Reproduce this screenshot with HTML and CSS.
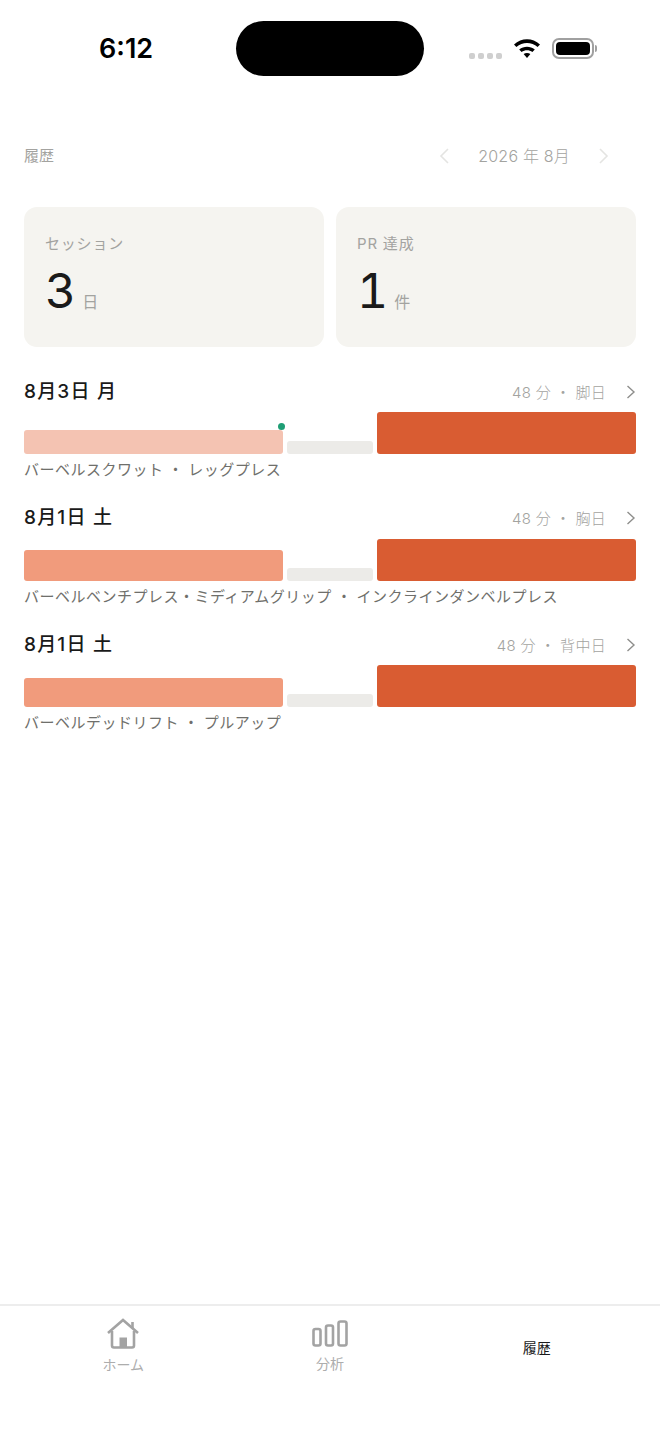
FILE: index.html
```html
<!DOCTYPE html>
<html lang="ja">
<head>
    <meta charset="UTF-8">
    <meta name="viewport" content="width=device-width, initial-scale=1.0">
    <title>履歴</title>
    <link rel="stylesheet" href="styles.css">
</head>
<body>
<div class="screen">

    <!-- Status bar -->
    <div class="status-bar">
        <div class="time">6:12</div>
        <div class="island"></div>
        <div class="status-icons">
            <div class="signal"><span></span><span></span><span></span><span></span></div>
            <svg class="wifi" width="28" height="22" viewBox="0 0 28 22">
                <path d="M1 7.5 C8.5 0.5 19.5 0.5 27 7.5 L24.6 10 C18.5 4.6 9.5 4.6 3.4 10 Z" fill="#000"/>
                <path d="M6.2 12.6 C10.8 8.8 17.2 8.8 21.8 12.6 L19.4 15.1 C16.2 12.6 11.8 12.6 8.6 15.1 Z" fill="#000"/>
                <path d="M10.6 17 C12.6 15.7 15.4 15.7 17.4 17 L14 21 Z" fill="#000"/>
            </svg>
            <div class="battery"><div class="battery-fill"></div></div>
            <div class="battery-cap"></div>
        </div>
    </div>

    <!-- Header -->
    <div class="header">
        <div class="page-title">履歴</div>
        <div class="month-nav">
            <svg class="nav-arrow" width="12" height="18" viewBox="0 0 12 18"><path d="M10 2 L3 9 L10 16" /></svg>
            <div class="month-label">2026 年 8月</div>
            <svg class="nav-arrow" width="12" height="18" viewBox="0 0 12 18"><path d="M2 2 L9 9 L2 16" /></svg>
        </div>
    </div>

    <!-- Summary cards -->
    <div class="cards">
        <div class="card">
            <div class="card-label">セッション</div>
            <div class="card-value"><span class="num">3</span><span class="unit">日</span></div>
        </div>
        <div class="card">
            <div class="card-label">PR 達成</div>
            <div class="card-value"><span class="num">1</span><span class="unit">件</span></div>
        </div>
    </div>

    <!-- Sessions -->
    <div class="sessions">
        <div class="session">
            <div class="session-head">
                <div class="session-date">8月3日 月</div>
                <div class="session-meta">48 分 ・ 脚日</div>
                <svg class="row-arrow" width="10" height="14" viewBox="0 0 10 14"><path d="M1.5 1 L8 7 L1.5 13" /></svg>
            </div>
            <div class="bars">
                <div class="bar bar-light"><span class="pr-dot"></span></div>
                <div class="bar bar-rest"></div>
                <div class="bar bar-main"></div>
            </div>
            <div class="session-names">バーベルスクワット ・ レッグプレス</div>
        </div>

        <div class="session">
            <div class="session-head">
                <div class="session-date">8月1日 土</div>
                <div class="session-meta">48 分 ・ 胸日</div>
                <svg class="row-arrow" width="10" height="14" viewBox="0 0 10 14"><path d="M1.5 1 L8 7 L1.5 13" /></svg>
            </div>
            <div class="bars">
                <div class="bar bar-mid" style="height: 31px"></div>
                <div class="bar bar-rest"></div>
                <div class="bar bar-main"></div>
            </div>
            <div class="session-names">バーベルベンチプレス・ミディアムグリップ ・ インクラインダンベルプレス</div>
        </div>

        <div class="session">
            <div class="session-head">
                <div class="session-date">8月1日 土</div>
                <div class="session-meta">48 分 ・ 背中日</div>
                <svg class="row-arrow" width="10" height="14" viewBox="0 0 10 14"><path d="M1.5 1 L8 7 L1.5 13" /></svg>
            </div>
            <div class="bars">
                <div class="bar bar-mid" style="height: 29px"></div>
                <div class="bar bar-rest"></div>
                <div class="bar bar-main"></div>
            </div>
            <div class="session-names">バーベルデッドリフト ・ プルアップ</div>
        </div>
    </div>

    <!-- Tab bar -->
    <div class="tabbar">
        <div class="tab">
            <svg width="34" height="31" viewBox="0 0 34 31">
                <path class="tab-line" d="M2 15 L17 2 L32 15" />
                <path class="tab-line" d="M26.5 4 V10" />
                <path class="tab-line" d="M6 13 V27.5 Q6 29.5 8 29.5 H26 Q28 29.5 28 27.5 V13" />
                <rect x="13.5" y="19.5" width="7.5" height="10" fill="#a3a3a3" />
            </svg>
            <div class="tab-label tab-label-home">ホーム</div>
        </div>
        <div class="tab tab-chart">
            <svg width="36" height="27" viewBox="0 0 36 27">
                <rect class="tab-line" x="1.5" y="9" width="7" height="16.5" rx="2" />
                <rect class="tab-line" x="14" y="5.5" width="7" height="20" rx="2" />
                <rect class="tab-line" x="26.5" y="1.5" width="8" height="24" rx="2" />
            </svg>
            <div class="tab-label tab-label-chart">分析</div>
        </div>
        <div class="tab tab-active">
            <div class="tab-label">履歴</div>
        </div>
    </div>

</div>
</body>
</html>
```

FILE: styles.css
```css
body {
    margin: 0;
    padding: 0;
    background-color: #fff;
    font-family: Inter, "Noto Sans CJK JP", sans-serif;
}

.screen {
    width: 660px;
    height: 1434px;
    display: flex;
    flex-direction: column;
    overflow: hidden;
}

/* Status bar */
.status-bar {
    position: relative;
    height: 76px;
    flex-shrink: 0;
}

.time {
    position: absolute;
    left: 99px;
    top: 33px;
    font-size: 27px;
    line-height: 32px;
    font-weight: 600;
    color: #000;
}

.island {
    position: absolute;
    left: 236px;
    top: 21px;
    width: 188px;
    height: 55px;
    border-radius: 28px;
    background-color: #000;
}

.status-icons {
    position: absolute;
    left: 469px;
    top: 38px;
    display: flex;
    align-items: center;
}

.signal {
    display: flex;
    gap: 3px;
    margin-top: 14px;
    margin-right: 11px;
}

.signal span {
    width: 6px;
    height: 6px;
    border-radius: 2px;
    background-color: #cfcfcf;
}

.wifi {
    margin-right: 11px;
    margin-top: -2px;
}

.battery {
    width: 42px;
    height: 21px;
    box-sizing: border-box;
    border: 2px solid #a0a0a0;
    border-radius: 7px;
    padding: 2px;
}

.battery-fill {
    height: 100%;
    border-radius: 4px;
    background-color: #000;
}

.battery-cap {
    width: 2px;
    height: 7px;
    margin-left: 1px;
    border-radius: 0 2px 2px 0;
    background-color: #a0a0a0;
}

/* Header */
.header {
    display: flex;
    justify-content: space-between;
    align-items: center;
    height: 40px;
    margin-top: 60px;
    padding: 0 50px 0 24px;
}

.page-title {
    font-size: 15px;
    line-height: 18px;
    color: #a3a3a0;
}

.month-nav {
    display: flex;
    align-items: center;
    gap: 28px;
}

.month-label {
    font-size: 16px;
    line-height: 20px;
    font-weight: 300;
    color: #a3a3a0;
    letter-spacing: 0.2px;
}

.nav-arrow path {
    fill: none;
    stroke: #e4e4e2;
    stroke-width: 1.6;
}

/* Summary cards */
.cards {
    display: grid;
    grid-template-columns: 1fr 1fr;
    gap: 12px;
    margin: 31px 24px 0;
}

.card {
    height: 140px;
    box-sizing: border-box;
    padding: 27px 21px 0;
    background-color: #f5f4f0;
    border-radius: 13px;
}

.card-label {
    font-size: 15px;
    line-height: 20px;
    color: #a3a3a0;
    letter-spacing: 0.8px;
}

.card-value {
    display: flex;
    align-items: baseline;
    gap: 6px;
    margin-top: 8px;
}

.num {
    font-size: 48px;
    line-height: 58px;
    font-weight: 400;
    color: #1a1a1a;
    font-variant-numeric: tabular-nums;
}

.unit {
    font-size: 16px;
    color: #a3a3a0;
}

/* Sessions */
.sessions {
    margin: 30px 24px 0;
    flex-grow: 1;
}

.session {
    height: 126.5px;
}

.session-head {
    display: flex;
    align-items: center;
    height: 28px;
}

.session-date {
    font-size: 19px;
    line-height: 28px;
    padding-top: 1px;
    font-weight: 500;
    color: #1a1a1a;
    flex-grow: 1;
    letter-spacing: 1.2px;
}

.session-meta {
    font-size: 15px;
    font-weight: 300;
    color: #a3a3a0;
    letter-spacing: 0.3px;
}

.row-arrow {
    margin-left: 20px;
    margin-top: 1px;
}

.row-arrow path {
    fill: none;
    stroke: #8e8e8c;
    stroke-width: 1.4;
}

.bars {
    display: grid;
    grid-template-columns: 3fr 1fr 3fr;
    gap: 4px;
    align-items: end;
    height: 42px;
    margin-top: 7px;
}

.bar {
    position: relative;
    height: 42px;
    border-radius: 3px;
}

.bar-main {
    background-color: #d95c32;
}

.bar-mid {
    background-color: #f19b7c;
}

.bar-light {
    height: 24px;
    background-color: #f4c3b2;
}

.bar-rest {
    height: 13px;
    background-color: #ecebe8;
}

.pr-dot {
    position: absolute;
    right: -2px;
    top: -7px;
    width: 7px;
    height: 7px;
    border-radius: 50%;
    background-color: #1f9e75;
}

.session-names {
    margin-top: 6px;
    font-size: 15px;
    line-height: 20px;
    letter-spacing: 0.49px;
    color: #6f6f6b;
}

/* Tab bar */
.tabbar {
    display: flex;
    height: 130px;
    flex-shrink: 0;
    box-sizing: border-box;
    border-top: 2px solid #ededed;
    padding: 0 20px;
}

.tab {
    flex: 1;
    display: flex;
    flex-direction: column;
    align-items: center;
    padding-top: 12px;
}

.tab-chart {
    padding-top: 14px;
}

.tab-label {
    font-size: 14px;
    line-height: 18px;
    color: #adadad;
}

.tab-label-home {
    margin-top: 7px;
}

.tab-label-chart {
    margin-top: 8px;
}

.tab-active {
    padding-top: 33px;
}

.tab-active .tab-label {
    color: #1a1a1a;
}

.tab-line {
    fill: none;
    stroke: #a3a3a3;
    stroke-width: 2.6;
}
```
